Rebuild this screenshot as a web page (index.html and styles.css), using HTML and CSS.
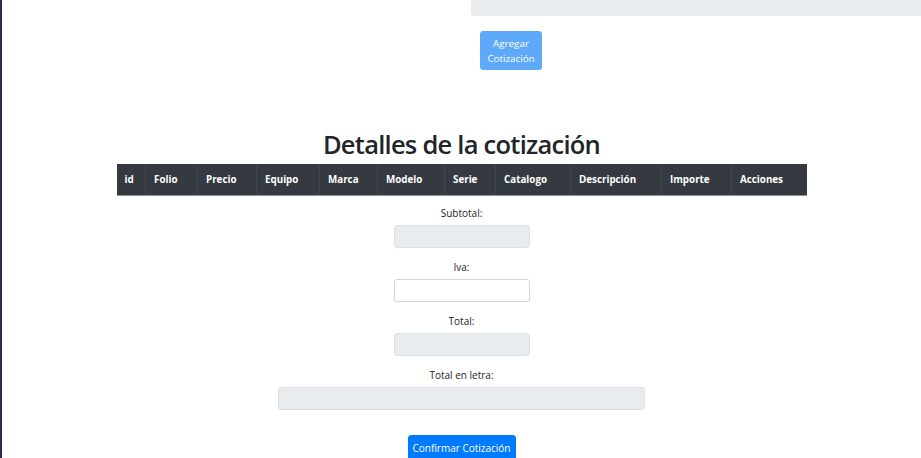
FILE: index.html
```html
<!DOCTYPE html>
<html lang="es">
<head>
<meta charset="utf-8">
<title>Detalles de la cotización</title>
<link rel="stylesheet" href="styles.css">
</head>
<body>
<div class="page">
  <div class="top-row"><div class="top-input"></div></div>
  <div class="add-row"><button class="btn btn-add" type="button" disabled>Agregar<br>Cotización</button></div>
  <h1 class="title">Detalles de la cotización</h1>
  <table class="details">
    <colgroup>
      <col style="width:29px"><col style="width:52px"><col style="width:59px"><col style="width:63px"><col style="width:58px"><col style="width:67px"><col style="width:51px"><col style="width:75px"><col style="width:91px"><col style="width:70px"><col style="width:75px">
    </colgroup>
    <thead>
      <tr>
        <th>id</th><th>Folio</th><th>Precio</th><th>Equipo</th><th>Marca</th><th>Modelo</th><th>Serie</th><th>Catalogo</th><th>Descripción</th><th>Importe</th><th>Acciones</th>
      </tr>
    </thead>
    <tbody></tbody>
  </table>
  <form class="totals">
    <div class="field">
      <label class="label">Subtotal:</label>
      <input class="input" type="text" disabled>
    </div>
    <div class="field">
      <label class="label">Iva:</label>
      <input class="input" type="text">
    </div>
    <div class="field">
      <label class="label">Total:</label>
      <input class="input" type="text" disabled>
    </div>
    <div class="field">
      <label class="label">Total en letra:</label>
      <input class="input input-wide" type="text" disabled>
    </div>
    <button class="btn btn-confirm" type="button">Confirmar Cotización</button>
  </form>
</div>
</body>
</html>
```
FILE: styles.css
```css
* { box-sizing: border-box; }
html, body { margin: 0; padding: 0; background: #fff; }
body {
  font-family: "Open Sans", "Noto Sans", sans-serif;
  color: #212529;
  height: 458px;
  overflow: hidden;
}
.page {
  border-left: 2px solid #272c49;
  min-height: 458px;
  display: flex;
  flex-direction: column;
  align-items: stretch;
}
.top-row {
  display: flex;
  justify-content: flex-end;
}
.top-input {
  width: 450px;
  height: 16px;
  background: #e9ecef;
  border-radius: 0 0 0 4px;
}
.add-row {
  padding-left: 478px;
  margin-top: 15px;
  display: flex;
}
.btn {
  font-family: inherit;
  color: #fff;
  border: 1px solid transparent;
  border-radius: 3px;
  cursor: pointer;
}
.btn-add {
  width: 62px;
  height: 39px;
  background: #5ea9f9;
  border-color: #5ea9f9;
  font-size: 9.8px;
  line-height: 15px;
  padding: 0;
}
.title {
  margin: 57px 0 3px;
  text-align: center;
  font-size: 25.5px;
  line-height: 34px;
  font-weight: 560;
  letter-spacing: -0.75px;
  color: #212529;
}
.details {
  align-self: center;
  width: 690px;
  border-collapse: collapse;
  table-layout: fixed;
}
.details th {
  background: #343a40;
  color: #fff;
  height: 31px;
  padding: 0 0 0 8px;
  text-align: left;
  font-size: 9.8px;
  font-weight: 700;
  border-left: 1px solid #40464d;
  border-bottom: 1px solid #8d9196;
}
.details th:first-child { border-left: none; }
.totals {
  margin-top: 9px;
  display: flex;
  flex-direction: column;
  align-items: center;
}
.field {
  display: flex;
  flex-direction: column;
  align-items: center;
  margin-bottom: 11px;
}
.label {
  font-size: 10px;
  line-height: 16px;
  margin-bottom: 4px;
}
.input {
  width: 136px;
  height: 23px;
  border: 1px solid #ced4da;
  border-radius: 3px;
  background: #fff;
  padding: 0 6px;
}
.input:disabled { background: #e9ecef; border-color: #dde1e5; }
.input-wide { width: 367px; }
.btn-confirm {
  margin-top: 14px;
  width: 108px;
  height: 26px;
  background: #007bff;
  border-color: #007bff;
  font-size: 10px;
  padding: 0;
}
```
